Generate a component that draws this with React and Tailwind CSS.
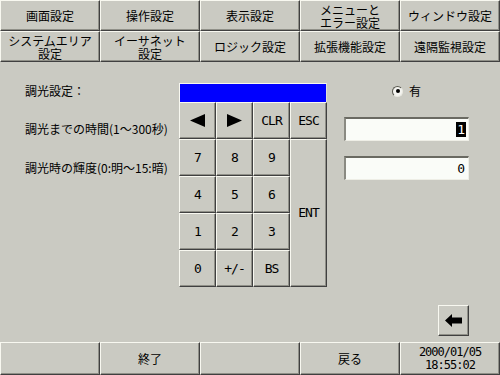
import React from "react";

const bevel =
  "border-t border-l border-r border-b border-t-[#f8f8f0] border-l-[#f8f8f0] border-r-[#404040] border-b-[#404040] shadow-[inset_-1px_-1px_0_#909088]";

const jp = "font-['Noto_Sans_CJK_JP',sans-serif]";
const mono = "font-['DejaVu_Sans_Mono','Liberation_Mono',monospace]";

function Tab({ children }) {
  return (
    <div
      className={`${bevel} flex items-center justify-center text-center text-[12px] leading-[13px] text-black whitespace-pre-line`}
    >
      {children}
    </div>
  );
}

function Key({ children, className = "" }) {
  return (
    <div
      className={`${bevel} flex items-center justify-center text-[13px] tracking-[-1px] text-black ${mono} ${className}`}
    >
      {children}
    </div>
  );
}

function TriLeft() {
  return (
    <svg width="15" height="13" viewBox="0 0 15 13">
      <polygon points="0,6.5 15,0 15,13" fill="#000" />
    </svg>
  );
}
function TriRight() {
  return (
    <svg width="15" height="13" viewBox="0 0 15 13">
      <polygon points="15,6.5 0,0 0,13" fill="#000" />
    </svg>
  );
}

export default function App() {
  const row1 = ["画面設定", "操作設定", "表示設定", "メニューと\nエラー設定", "ウィンドウ設定"];
  const row2 = ["システムエリア\n設定", "イーサネット\n設定", "ロジック設定", "拡張機能設定", "遠隔監視設定"];
  return (
    <div className={`w-[500px] h-[375px] bg-[#cacac2] flex flex-col overflow-hidden ${jp}`}>
      {/* Tabs */}
      <div className="grid grid-cols-5 h-[31px]">
        {row1.map((t) => (
          <Tab key={t}>{t}</Tab>
        ))}
      </div>
      <div className="grid grid-cols-5 h-[31px]">
        {row2.map((t) => (
          <Tab key={t}>{t}</Tab>
        ))}
      </div>

      {/* Content */}
      <div className="h-[280px] flex flex-col">
        <div className="flex">
          {/* Labels */}
          <div className="w-[179px] pl-[25px] flex flex-col text-[12px] leading-4 text-black whitespace-nowrap">
            <div className="mt-[21px] h-4">調光設定：</div>
            <div className="mt-[22px] h-4">調光までの時間(1～300秒)</div>
            <div className="mt-[23px] h-4">調光時の輝度(0:明～15:暗)</div>
          </div>

          {/* Keypad */}
          <div className="relative w-[148px] flex flex-col">
            <div className="mt-[21px] h-[19px] border-t border-l border-r border-t-[#f8f8f0] border-l-[#f8f8f0] border-r-[#e0e0d8] bg-[#0000ff]" />
            <div className="grid grid-cols-[repeat(4,37px)] grid-rows-[repeat(5,37px)]">
              <Key><TriLeft /></Key>
              <Key><TriRight /></Key>
              <Key>CLR</Key>
              <Key>ESC</Key>
              <Key>7</Key>
              <Key>8</Key>
              <Key>9</Key>
              <Key className="col-start-4 row-start-2 row-span-4">ENT</Key>
              <Key>4</Key>
              <Key>5</Key>
              <Key>6</Key>
              <Key>1</Key>
              <Key>2</Key>
              <Key>3</Key>
              <Key>0</Key>
              <Key>+/-</Key>
              <Key>BS</Key>
            </div>
          </div>

          {/* Right column */}
          <div className="ml-[17px] w-[125px] flex flex-col">
            <div className="mt-[21px] h-4 pl-[48px] flex items-center gap-[6px] text-[12px] leading-4">
              <div className="w-[11px] h-[11px] rounded-full bg-[#f4f4f0] border border-t-[#58584f] border-l-[#58584f] border-r-[#e8e8e0] border-b-[#e8e8e0] flex items-center justify-center">
                <div className="w-[4px] h-[4px] rounded-full bg-black" />
              </div>
              <span>有</span>
            </div>
            <div className="mt-[18px] h-[24px] bg-[#fafcf8] border-t-2 border-l-2 border-b border-r border-t-[#6a6a62] border-l-[#8a8a82] border-b-[#eeeee6] border-r-[#eeeee6] flex items-center justify-end pr-[2px]">
              <span className={`bg-black text-white text-[13px] leading-[15px] px-[1px] ${mono}`}>1</span>
            </div>
            <div className="mt-[15px] h-[24px] bg-[#fafcf8] border-t-2 border-l-2 border-b border-r border-t-[#6a6a62] border-l-[#8a8a82] border-b-[#eeeee6] border-r-[#eeeee6] flex items-center justify-end pr-[3px]">
              <span className={`text-black text-[13px] leading-[15px] ${mono}`}>0</span>
            </div>
          </div>
        </div>

        <div className="flex-1" />
        <div className="flex justify-end pr-[31px] pb-[6px]">
          <div className={`${bevel} w-[31px] h-[31px] flex items-center justify-center`}>
            <svg width="17" height="13" viewBox="0 0 17 13">
              <polygon points="0,6.5 7,0 7,3.5 17,3.5 17,9.5 7,9.5 7,13" fill="#000" />
            </svg>
          </div>
        </div>
      </div>

      {/* Bottom bar */}
      <div className="grid grid-cols-5 h-[33px]">
        <Tab>{""}</Tab>
        <Tab>終了</Tab>
        <Tab>{""}</Tab>
        <Tab>戻る</Tab>
        <div
          className={`${bevel} flex flex-col items-center justify-center text-[12px] leading-[13px] tracking-[-1px] text-black ${mono}`}
        >
          <span className="block h-[13px]">2000/01/05</span>
          <span className="block h-[13px]">18:55:02</span>
        </div>
      </div>
    </div>
  );
}
